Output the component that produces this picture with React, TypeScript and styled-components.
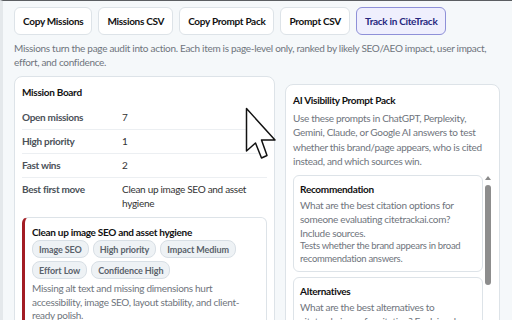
import styled, { createGlobalStyle } from 'styled-components'

const GlobalStyle = createGlobalStyle`
  html, body {
    margin: 0;
    padding: 0;
    background: #f5f8fa;
  }
  body {
    font-family: Lato, "Noto Sans", sans-serif;
    font-size: 10px;
    letter-spacing: -0.3px;
    color: #111827;
  }
`

const BORDER = '#dde3e8'
const MUTED = '#6f757d'

const Page = styled.div`
  position: relative;
  width: 512px;
  height: 320px;
  overflow: hidden;
  box-sizing: border-box;
  border-top: 1px solid #5b5e62;
  border-left: 3px solid #e4e8eb;
  padding: 6px 12px 0 11px;
`

const Toolbar = styled.div`
  display: flex;
  gap: 6px;
`

const ActionButton = styled.button<{ $accent?: boolean }>`
  height: 28px;
  padding: 0 8px;
  border-radius: 6px;
  border: 1px solid ${(p) => (p.$accent ? '#8e90d8' : BORDER)};
  background: ${(p) => (p.$accent ? '#efeffd' : '#ffffff')};
  color: ${(p) => (p.$accent ? '#27287f' : '#111111')};
  font-family: inherit;
  font-size: 10px;
  letter-spacing: -0.3px;
  font-weight: 700;
  white-space: nowrap;
`

const Intro = styled.p`
  margin: 6px 0 0;
  line-height: 14px;
  color: ${MUTED};
`

const Columns = styled.div`
  display: grid;
  grid-template-columns: minmax(0, 1.215fr) minmax(0, 1fr);
  gap: 10px;
  align-items: start;
  margin-top: 7px;
`

const Card = styled.section<{ $offset?: number }>`
  background: #ffffff;
  border: 1px solid ${BORDER};
  border-radius: 8px;
  padding: 8px 7px 8px 7px;
  margin-top: ${(p) => p.$offset || 0}px;
  min-height: 260px;
`

const CardTitle = styled.h3<{ $gap?: number }>`
  margin: 0 0 ${(p) => p.$gap ?? 4}px;
  font-size: 10px;
  line-height: 14px;
  font-weight: 700;
  color: #111111;
`

const StatRow = styled.div<{ $last?: boolean }>`
  display: grid;
  grid-template-columns: 100px 1fr;
  padding: 4px 0;
  line-height: ${(p) => (p.$last ? 14 : 15)}px;
  border-bottom: 1px solid ${(p) => (p.$last ? 'transparent' : '#eceff2')};
`

const StatLabel = styled.span`
  font-weight: 700;
  color: #4b5159;
`

const StatValue = styled.span`
  color: #333333;
`

const MissionItem = styled.article`
  margin-top: 2px;
  background: #ffffff;
  border: 1px solid ${BORDER};
  border-left: 3px solid #a31d24;
  border-radius: 6px;
  padding: 7px 7px 8px;
`

const MissionTitle = styled.div`
  line-height: 14px;
  font-weight: 700;
  color: #111111;
`

const ChipList = styled.div`
  display: flex;
  flex-wrap: wrap;
  gap: 3px 4px;
  margin-top: 1px;
`

const Chip = styled.span`
  height: 16px;
  padding: 0 6px;
  display: inline-flex;
  align-items: center;
  border-radius: 8px;
  background: #eef2f5;
  border: 1px solid #d8dfe5;
  color: #5a626b;
  font-size: 9px;
  letter-spacing: -0.1px;
  font-weight: 700;
  white-space: nowrap;
`

const MissionText = styled.p`
  margin: 3px 0 0;
  line-height: 13.5px;
  color: ${MUTED};
`

const PackIntro = styled.p`
  margin: 3px 0 0;
  line-height: 14.3px;
  color: ${MUTED};
`

const PromptArea = styled.div`
  display: flex;
  gap: 2px;
  margin-top: 7px;
`

const PromptList = styled.div`
  flex: 1;
  min-width: 0;
  display: flex;
  flex-direction: column;
  gap: 5px;
`

const PromptCard = styled.div`
  border: 1px solid ${BORDER};
  border-radius: 6px;
  padding: 6px 6px 6px;
`

const PromptTitle = styled.div`
  line-height: 14px;
  font-weight: 700;
  color: #111111;
`

const PromptText = styled.p`
  margin: 2px 0 0;
  line-height: 14px;
  color: ${MUTED};
`

const PromptNote = styled.p`
  margin: -1.5px 0 0;
  font-size: 9.5px;
  line-height: 13px;
  color: ${MUTED};
`

const ScrollTrack = styled.div`
  width: 7px;
  display: flex;
  flex-direction: column;
  align-items: center;
  gap: 5px;
  padding-top: 1px;
`

const ScrollArrow = styled.div`
  width: 0;
  height: 0;
  border-left: 3.5px solid transparent;
  border-right: 3.5px solid transparent;
  border-bottom: 4px solid #8a8a8a;
`

const ScrollThumb = styled.div`
  width: 6px;
  height: 100px;
  border-radius: 3px;
  background: #8d8d8d;
`

const Pointer = styled.svg`
  position: absolute;
  left: 242px;
  top: 106px;
  pointer-events: none;
`

const stats = [
  { label: 'Open missions', value: '7' },
  { label: 'High priority', value: '1' },
  { label: 'Fast wins', value: '2' },
  { label: 'Best first move', value: 'Clean up image SEO and asset hygiene' },
]

const chips = ['Image SEO', 'High priority', 'Impact Medium', 'Effort Low', 'Confidence High']

const App = () => {
  return (
    <>
      <GlobalStyle />
      <Page>
        <Toolbar>
          <ActionButton>Copy Missions</ActionButton>
          <ActionButton>Missions CSV</ActionButton>
          <ActionButton>Copy Prompt Pack</ActionButton>
          <ActionButton>Prompt CSV</ActionButton>
          <ActionButton $accent>Track in CiteTrack</ActionButton>
        </Toolbar>
        <Intro>
          Missions turn the page audit into action. Each item is page-level only, ranked by likely
          SEO/AEO impact, user impact, effort, and confidence.
        </Intro>
        <Columns>
          <Card>
            <CardTitle $gap={7}>Mission Board</CardTitle>
            {stats.map((s, i) => (
              <StatRow key={s.label} $last={i === stats.length - 1}>
                <StatLabel>{s.label}</StatLabel>
                <StatValue>{s.value}</StatValue>
              </StatRow>
            ))}
            <MissionItem>
              <MissionTitle>Clean up image SEO and asset hygiene</MissionTitle>
              <ChipList>
                {chips.map((c) => (
                  <Chip key={c}>{c}</Chip>
                ))}
              </ChipList>
              <MissionText>
                Missing alt text and missing dimensions hurt accessibility, image SEO, layout
                stability, and client-ready polish.
              </MissionText>
            </MissionItem>
          </Card>
          <Card $offset={8}>
            <CardTitle>AI Visibility Prompt Pack</CardTitle>
            <PackIntro>
              Use these prompts in ChatGPT, Perplexity, Gemini, Claude, or Google AI answers to
              test whether this brand/page appears, who is cited instead, and which sources win.
            </PackIntro>
            <PromptArea>
              <PromptList>
                <PromptCard>
                  <PromptTitle>Recommendation</PromptTitle>
                  <PromptText>
                    What are the best citation options for someone evaluating citetrackai.com?
                    Include sources.
                  </PromptText>
                  <PromptNote>Tests whether the brand appears in broad recommendation answers.</PromptNote>
                </PromptCard>
                <PromptCard>
                  <PromptTitle>Alternatives</PromptTitle>
                  <PromptText>
                    What are the best alternatives to citetrackai.com for citation? Explain who
                    wins and why.
                  </PromptText>
                </PromptCard>
              </PromptList>
              <ScrollTrack>
                <ScrollArrow />
                <ScrollThumb />
              </ScrollTrack>
            </PromptArea>
          </Card>
        </Columns>
        <Pointer width="32" height="54" viewBox="0 0 32 54">
          <path
            d="M1.5 1.5 L1.5 44 L10.5 36 L16.5 51 L22 48.5 L16.5 33 L30 33 Z"
            fill="#ffffff"
            stroke="#111111"
            strokeWidth="1.5"
            strokeLinejoin="round"
          />
        </Pointer>
      </Page>
    </>
  )
}

export default App
